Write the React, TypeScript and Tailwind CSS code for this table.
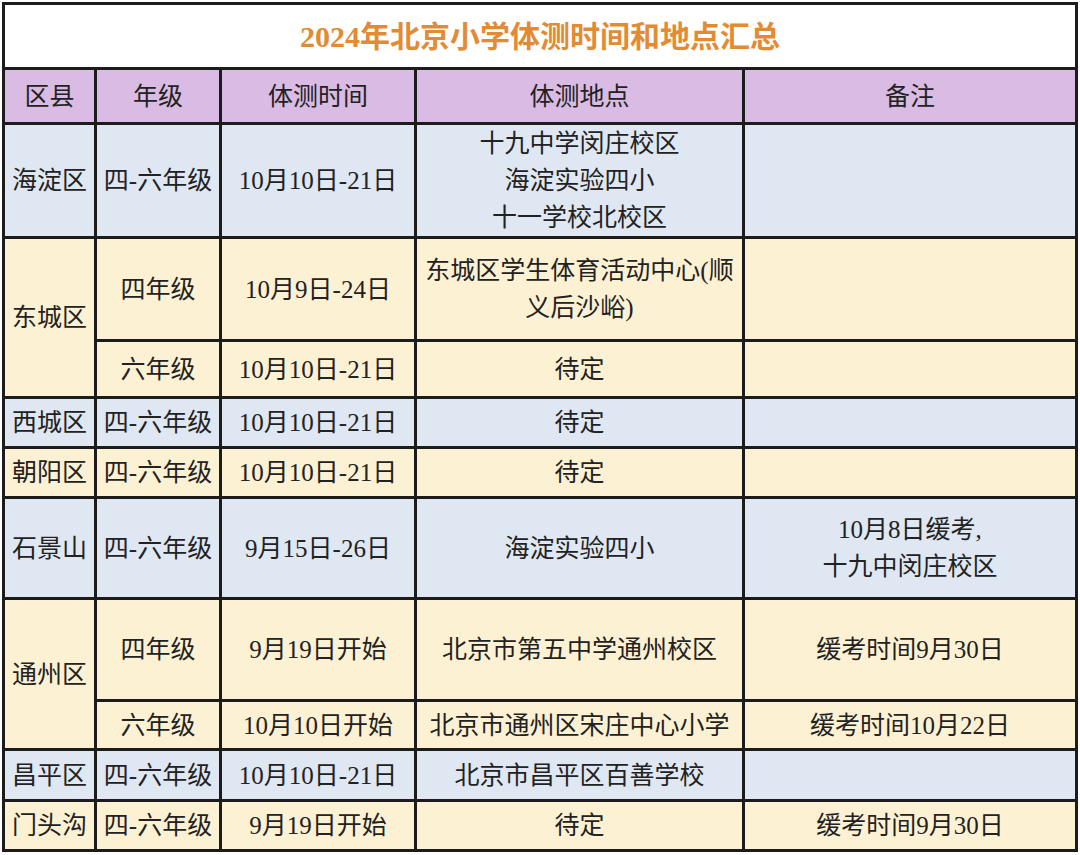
const FONT = { fontFamily: '"Liberation Serif", "Noto Sans CJK SC", serif' };

type Row = {
  district?: string;
  span?: number;
  grade: string;
  time: string;
  place: string[];
  note: string[];
  tone: 'blue' | 'yellow';
};

const ROWS: Row[] = [
  { district: '海淀区', grade: '四-六年级', time: '10月10日-21日', place: ['十九中学闵庄校区', '海淀实验四小', '十一学校北校区'], note: [], tone: 'blue' },
  { district: '东城区', span: 2, grade: '四年级', time: '10月9日-24日', place: ['东城区学生体育活动中心(顺', '义后沙峪)'], note: [], tone: 'yellow' },
  { grade: '六年级', time: '10月10日-21日', place: ['待定'], note: [], tone: 'yellow' },
  { district: '西城区', grade: '四-六年级', time: '10月10日-21日', place: ['待定'], note: [], tone: 'blue' },
  { district: '朝阳区', grade: '四-六年级', time: '10月10日-21日', place: ['待定'], note: [], tone: 'yellow' },
  { district: '石景山', grade: '四-六年级', time: '9月15日-26日', place: ['海淀实验四小'], note: ['10月8日缓考,', '十九中闵庄校区'], tone: 'blue' },
  { district: '通州区', span: 2, grade: '四年级', time: '9月19日开始', place: ['北京市第五中学通州校区'], note: ['缓考时间9月30日'], tone: 'yellow' },
  { grade: '六年级', time: '10月10日开始', place: ['北京市通州区宋庄中心小学'], note: ['缓考时间10月22日'], tone: 'yellow' },
  { district: '昌平区', grade: '四-六年级', time: '10月10日-21日', place: ['北京市昌平区百善学校'], note: [], tone: 'blue' },
  { district: '门头沟', grade: '四-六年级', time: '9月19日开始', place: ['待定'], note: ['缓考时间9月30日'], tone: 'yellow' },
];

function Cell({ lines, tone, tall }: { lines: string[]; tone: 'blue' | 'yellow' | 'purple'; tall?: boolean }) {
  const bg = tone === 'blue' ? 'bg-[#dfe7f2]' : tone === 'yellow' ? 'bg-[#fdf1d3]' : 'bg-[#d9bbe4]';
  return (
    <div className={`${bg} ${tall ? 'row-span-2' : ''} flex flex-col items-center justify-center text-center text-[25px] leading-[37px] text-[#222] whitespace-nowrap`}>
      {lines.map((l) => (
        <span key={l}>{l}</span>
      ))}
    </div>
  );
}

export default function App() {
  return (
    <div className="w-[1080px] h-[855px] bg-white pt-[2px] pl-[2px]" style={FONT}>
      <div className="w-[1076px] bg-[#1c1c1c] p-[3px] grid gap-[3px] grid-cols-[89px_122px_192px_325px_330px] grid-rows-[62px_52px_111px_100px_54px_47px_47px_98px_99px_46px_48px_47px]">
        <div className="col-span-5 bg-white flex items-center justify-center text-[30px] font-bold text-[#e38b34]">
          2024年北京小学体测时间和地点汇总
        </div>
        <Cell lines={['区县']} tone="purple" />
        <Cell lines={['年级']} tone="purple" />
        <Cell lines={['体测时间']} tone="purple" />
        <Cell lines={['体测地点']} tone="purple" />
        <Cell lines={['备注']} tone="purple" />
        {ROWS.map((r, i) => (
          <div key={i} className="contents">
            {r.district && <Cell lines={[r.district]} tone={r.tone} tall={r.span === 2} />}
            <Cell lines={[r.grade]} tone={r.tone} />
            <Cell lines={[r.time]} tone={r.tone} />
            <Cell lines={r.place} tone={r.tone} />
            <Cell lines={r.note} tone={r.tone} />
          </div>
        ))}
      </div>
    </div>
  );
}
